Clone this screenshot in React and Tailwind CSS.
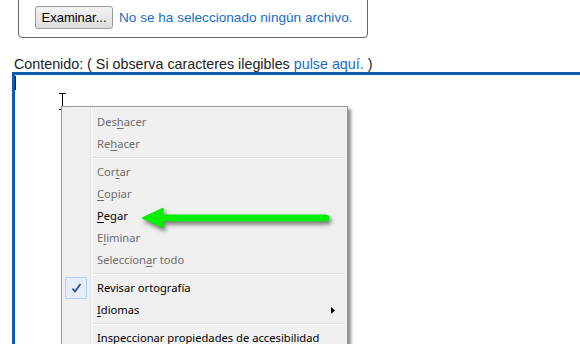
import React from 'react';

const disabled = 'text-[#6d6d6d]';

function Item({ children, muted, check, arrow }) {
  return (
    <div className="relative flex items-center h-[22px] pl-[35px]">
      {check && (
        <div className="absolute left-[3px] top-0 w-[22px] h-[22px] rounded-[2px] border border-[#aecff7] bg-[#e5eef9] flex items-center justify-center">
          <svg width="11" height="10" viewBox="0 0 11 10">
            <path d="M1.5 5.5 L4 8.5 L9.5 1" fill="none" stroke="#2a4a9a" strokeWidth="1.8" />
          </svg>
        </div>
      )}
      <span className={muted ? disabled : 'text-black'}>{children}</span>
      {arrow && (
        <svg className="absolute right-[12px] top-[8px]" width="4" height="7" viewBox="0 0 4 7">
          <path d="M0 0 L4 3.5 L0 7 Z" fill="#000" />
        </svg>
      )}
    </div>
  );
}

function Sep() {
  return (
    <div className="h-[6px] flex flex-col justify-center pl-[30px] pr-[2px]">
      <div className="h-px bg-[#e0e0e0]" />
      <div className="h-px bg-white" />
    </div>
  );
}

const u = (s) => <span className="underline underline-offset-2">{s}</span>;

export default function App() {
  return (
    <div className="relative w-[580px] h-[344px] overflow-hidden bg-white font-['Liberation_Sans',Arial,sans-serif] text-[14px] text-[#222]">
      <div className="ml-[18px] mt-[-12px] w-[350px] h-[50px] border border-[#666] rounded-[4px] flex items-end pb-[8px] pl-[16px] gap-[6px]">
        <button className="h-[23px] w-[78px] border border-[#9a9a9a] rounded-[3px] bg-gradient-to-b from-[#f2f2f2] to-[#dedede] text-[13px] text-black leading-none">
          Examinar...
        </button>
        <span className="text-[#1a6cc6] text-[13.6px] leading-[23px]">No se ha seleccionado ningún archivo.</span>
      </div>

      <div className="mt-[18px] ml-[14px] leading-[16px] text-[14.3px]">
        Contenido: ( Si observa caracteres ilegibles <span className="text-[#1a6cc6]">pulse aquí.</span> )
      </div>

      <div className="ml-[12px] h-[300px] border-l-[3px] border-t-[3px] border-[#0b5cad] pt-[1px]">
        <div className="w-px h-[14px] bg-black" />
      </div>

      <svg className="absolute left-[58px] top-[93px]" width="9" height="17" viewBox="0 0 9 17">
        <path d="M1 0.5 H8 M4.5 0.5 V16.5 M1 16.5 H8" stroke="#000" strokeWidth="1" fill="none" />
      </svg>

      <div className="absolute left-[61px] top-[106px] w-[287px] h-[260px] bg-[#f0f0f0] border border-[#979797] shadow-[3px_3px_3px_rgba(0,0,0,0.45)] font-['Noto_Sans',sans-serif] text-[11.2px] pt-[4px]">
        <div className="absolute left-[28px] top-0 bottom-0 w-px bg-[#e2e3e3]" />
        <div className="absolute left-[29px] top-0 bottom-0 w-px bg-white" />
        <Item muted>Des{u('h')}acer</Item>
        <Item muted>Re{u('h')}acer</Item>
        <Sep />
        <Item muted>Cor{u('t')}ar</Item>
        <Item muted>{u('C')}opiar</Item>
        <Item>{u('P')}egar</Item>
        <Item muted>E{u('l')}iminar</Item>
        <Item muted>Seleccion{u('a')}r todo</Item>
        <Sep />
        <Item check>Revisar ortografía</Item>
        <Item arrow>{u('I')}diomas</Item>
        <Sep />
        <Item>Inspeccionar propiedades de accesibilidad</Item>
      </div>

      <svg className="absolute left-[136px] top-[203px] drop-shadow-[2px_3px_2px_rgba(0,0,0,0.5)]" width="200" height="32" viewBox="136 203 200 32">
        <path d="M142 218 L162 208.5 Q164 208 163.5 210 L162 215 L326 215 Q329 215 329 218 Q329 221 326 221 L162 221 L163.5 226 Q164 228.5 162 227.5 Z" fill="#00f000" stroke="#00f000" strokeWidth="1" strokeLinejoin="round" />
      </svg>
    </div>
  );
}
